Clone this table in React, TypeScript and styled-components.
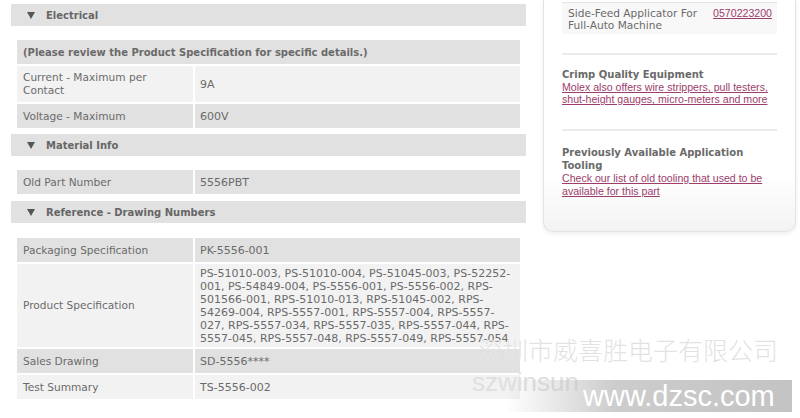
import React from "react";
import styled, { createGlobalStyle } from "styled-components";

const GlobalStyle = createGlobalStyle`
  html, body { margin: 0; padding: 0; background: #fff; }
  body {
    font-family: "DejaVu Sans", Verdana, sans-serif;
    font-size: 11px;
    color: #666;
    width: 800px;
    height: 418px;
    overflow: hidden;
  }
`;

const Page = styled.div`
  position: relative;
  display: flex;
  align-items: flex-start;
  padding: 0 0 0 11px;
  height: 418px;
  box-sizing: border-box;
`;

const Main = styled.div`
  width: 515px;
  padding-top: 4px;
  display: flex;
  flex-direction: column;
`;

const SectionHeader = styled.div<{ $gap: number }>`
  height: 22px;
  margin-top: ${(p) => p.$gap}px;
  background: #e1e1e1;
  display: flex;
  align-items: center;
  gap: 11px;
  padding-left: 16px;
  font-weight: bold;
  font-size: 10px;
  color: #666;
`;

const Arrow = styled.span`
  width: 0;
  height: 0;
  border-left: 4px solid transparent;
  border-right: 4px solid transparent;
  border-top: 7px solid #555;
  margin-top: 1px;
`;

const SpecGrid = styled.div<{ $top: number }>`
  display: grid;
  grid-template-columns: 176px 1fr;
  gap: 2px;
  margin: ${(p) => p.$top}px 6px 0;
`;

const NoteCell = styled.div`
  grid-column: 1 / -1;
  background: #e1e1e1;
  height: 24px;
  display: flex;
  align-items: center;
  padding: 0 6px;
  font-weight: bold;
  font-size: 10px;
  color: #6a6a6a;
`;

const Cell = styled.div<{ $light?: boolean; $value?: boolean }>`
  background: ${(p) => (p.$light ? "#f2f2f2" : "#e1e1e1")};
  min-height: 24px;
  box-sizing: border-box;
  display: flex;
  align-items: center;
  padding: ${(p) => (p.$value ? "3px 6px 2px 5px" : "5px 6px")};
  line-height: 13px;
  font-size: ${(p) => (p.$value ? "11px" : "10.6px")};
  color: #6a6a6a;
`;

const Sidebar = styled.div`
  margin-left: 17px;
  width: 253px;
  height: 232px;
  box-sizing: border-box;
  border: 1px solid #e3e3e3;
  border-top: none;
  border-radius: 0 0 10px 10px;
  box-shadow: 0 2px 4px rgba(0, 0, 0, 0.07);
  background: linear-gradient(to bottom, #fff 75%, #f3f3f3 100%);
  padding: 0 18px;
  display: flex;
  flex-direction: column;
`;

const TopRule = styled.div`
  margin-top: 2px;
  border-top: 1px solid #e4e4e4;
`;

const ToolRow = styled.div`
  background: #f8f8f8;
  display: flex;
  justify-content: space-between;
  padding: 4px 5px 3px 6px;
  line-height: 12px;
  font-size: 10.6px;
  color: #6a6a6a;
`;

const ToolName = styled.span`
  width: 140px;
`;

const Link = styled.a`
  font-family: "Liberation Sans", Arial, sans-serif;
  font-size: 10.6px;
  color: #9c3d6b;
  text-decoration: underline;
`;

const Divider = styled.div<{ $top: number }>`
  margin-top: ${(p) => p.$top}px;
  border-top: 2px solid #ebebeb;
`;

const Block = styled.div<{ $top: number }>`
  margin-top: ${(p) => p.$top}px;
  display: flex;
  flex-direction: column;
`;

const BlockTitle = styled.div`
  font-weight: bold;
  font-size: 10px;
  line-height: 13px;
  color: #6a6a6a;
`;

const BlockLink = styled(Link)<{ $lh: number }>`
  line-height: ${(p) => p.$lh}px;
`;

const Watermark = styled.div`
  position: absolute;
  left: 0;
  top: 0;
  width: 800px;
  height: 418px;
  pointer-events: none;
`;

const CnMark = styled.div`
  position: absolute;
  left: 478px;
  top: 334px;
  font-family: "Noto Sans CJK SC", sans-serif;
  font-weight: 300;
  font-size: 25px;
  line-height: 30px;
  color: rgba(218, 218, 218, 0.8);
  text-shadow: 0 0 1px rgba(255, 255, 255, 0.8);
  white-space: nowrap;
`;

const EnMark = styled.div`
  position: absolute;
  left: 472px;
  top: 367px;
  font-family: "Liberation Sans", Arial, sans-serif;
  font-size: 26px;
  line-height: 30px;
  color: #e0e0e0;
  white-space: nowrap;
`;

const Bar = styled.div`
  position: absolute;
  left: 505px;
  top: 380px;
  width: 287px;
  height: 32px;
  background: linear-gradient(
    to right,
    rgba(196, 196, 196, 0) 0%,
    rgba(196, 196, 196, 0.85) 38%,
    #c3c3c3 100%
  );
  padding-left: 78px;
  box-sizing: border-box;
  font-family: "Liberation Sans", Arial, sans-serif;
  font-size: 29px;
  line-height: 32px;
  color: #fff;
  white-space: nowrap;
`;

const productSpec =
  "PS-51010-003, PS-51010-004, PS-51045-003, PS-52252-001, PS-54849-004, PS-5556-001, PS-5556-002, RPS-501566-001, RPS-51010-013, RPS-51045-002, RPS-54269-004, RPS-5557-001, RPS-5557-004, RPS-5557-027, RPS-5557-034, RPS-5557-035, RPS-5557-044, RPS-5557-045, RPS-5557-048, RPS-5557-049, RPS-5557-054";

export default function App() {
  return (
    <>
      <GlobalStyle />
      <Page>
        <Main>
          <SectionHeader $gap={0}>
            <Arrow />
            Electrical
          </SectionHeader>
          <SpecGrid $top={14}>
            <NoteCell>(Please review the Product Specification for specific details.)</NoteCell>
            <Cell $light>Current - Maximum per Contact</Cell>
            <Cell $light $value>9A</Cell>
            <Cell>Voltage - Maximum</Cell>
            <Cell $value>600V</Cell>
          </SpecGrid>

          <SectionHeader $gap={6}>
            <Arrow />
            Material Info
          </SectionHeader>
          <SpecGrid $top={14}>
            <Cell>Old Part Number</Cell>
            <Cell $value>5556PBT</Cell>
          </SpecGrid>

          <SectionHeader $gap={7}>
            <Arrow />
            Reference - Drawing Numbers
          </SectionHeader>
          <SpecGrid $top={15}>
            <Cell>Packaging Specification</Cell>
            <Cell $value>PK-5556-001</Cell>
            <Cell $light>Product Specification</Cell>
            <Cell $light $value>{productSpec}</Cell>
            <Cell>Sales Drawing</Cell>
            <Cell $value>SD-5556****</Cell>
            <Cell $light>Test Summary</Cell>
            <Cell $light $value>TS-5556-002</Cell>
          </SpecGrid>
        </Main>

        <Sidebar>
          <TopRule />
          <ToolRow>
            <ToolName>Side-Feed Applicator For Full-Auto Machine</ToolName>
            <Link href="#">0570223200</Link>
          </ToolRow>
          <Divider $top={19} />
          <Block $top={13}>
            <BlockTitle>Crimp Quality Equipment</BlockTitle>
            <BlockLink $lh={12} href="#">
              Molex also offers wire strippers, pull testers, shut-height gauges, micro-meters and more
            </BlockLink>
          </Block>
          <Divider $top={24} />
          <Block $top={15}>
            <BlockTitle>Previously Available Application Tooling</BlockTitle>
            <BlockLink $lh={13} href="#">
              Check our list of old tooling that used to be available for this part
            </BlockLink>
          </Block>
        </Sidebar>

        <Watermark>
          <CnMark>深圳市威喜胜电子有限公司</CnMark>
          <EnMark>szwinsun</EnMark>
          <Bar>www.dzsc.com</Bar>
        </Watermark>
      </Page>
    </>
  );
}
